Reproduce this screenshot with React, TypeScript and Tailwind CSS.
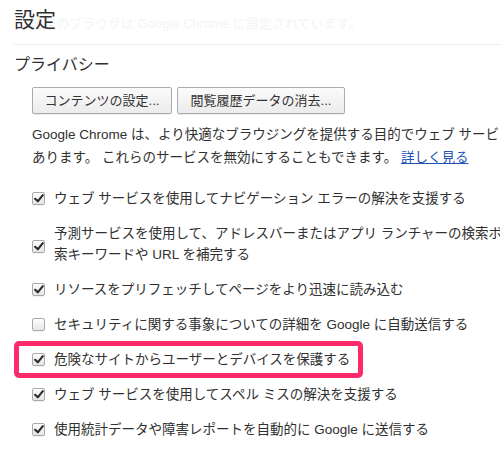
import React from 'react'

interface Option {
  id: string
  lines: string[]
  checked: boolean
  highlight?: boolean
}

const options: Option[] = [
  { id: 'nav', lines: ['ウェブ サービスを使用してナビゲーション エラーの解決を支援する'], checked: true },
  {
    id: 'predict',
    lines: [
      '予測サービスを使用して、アドレスバーまたはアプリ ランチャーの検索ボックスに入力した検',
      '索キーワードや URL を補完する',
    ],
    checked: true,
  },
  { id: 'prefetch', lines: ['リソースをプリフェッチしてページをより迅速に読み込む'], checked: true },
  { id: 'security', lines: ['セキュリティに関する事象についての詳細を Google に自動送信する'], checked: false },
  { id: 'safe', lines: ['危険なサイトからユーザーとデバイスを保護する'], checked: true, highlight: true },
  { id: 'spell', lines: ['ウェブ サービスを使用してスペル ミスの解決を支援する'], checked: true },
  { id: 'stats', lines: ['使用統計データや障害レポートを自動的に Google に送信する'], checked: true },
]

const Checkbox = ({ checked }: { checked: boolean }) => (
  <span className="mt-[4px] flex h-[13px] w-[13px] shrink-0 items-center justify-center rounded-[2px] border border-[#a9a9a9] bg-gradient-to-b from-[#fdfdfd] to-[#e6e6e6] shadow-[0_1px_0_rgba(0,0,0,0.05)]">
    {checked && (
      <svg width="10" height="9" viewBox="0 0 10 9">
        <path d="M1.2 4.8 L3.8 7.3 L8.8 1.2" fill="none" stroke="#2a2a2a" strokeWidth="2.1" strokeLinecap="round" strokeLinejoin="round" />
      </svg>
    )}
  </span>
)

const Button = ({ label, width }: { label: string; width: string }) => (
  <button
    className={`h-[27px] ${width} rounded-[2px] border border-[#ababab] bg-gradient-to-b from-[#fbfbfb] to-[#ececec] text-[13px] text-[#333] shadow-[0_1px_0_rgba(0,0,0,0.08)]`}
  >
    {label}
  </button>
)

const App = () => {
  return (
    <div
      className="relative h-[449px] w-[500px] overflow-hidden bg-white text-[#303030]"
      style={{ fontFamily: '"Liberation Sans", "Noto Sans CJK JP", sans-serif' }}
    >
      {/* header, with scrolled text faintly under it */}
      <div className="relative ml-[13px] h-[45px] border-b border-[#ececec]">
        <span className="absolute left-[17px] top-[14px] whitespace-nowrap text-[13px] leading-[20px] text-[#f4f4f4]">
          既定のブラウザは Google Chrome に設定されています。
        </span>
        <h1 className="relative pl-[1px] pt-[8px] text-[21px] leading-[24px] text-[#303030]">設定</h1>
      </div>

      <div className="pl-[14px]">
        <h2 className="mt-[10px] text-[16px] leading-[20px]">プライバシー</h2>

        <div className="ml-[18px] mt-[12px] flex gap-[5px]">
          <Button label="コンテンツの設定..." width="w-[140px]" />
          <Button label="閲覧履歴データの消去..." width="w-[168px]" />
        </div>

        <div className="ml-[18px] mt-[9px] whitespace-nowrap text-[13.5px] leading-[23px]">
          <p>Google Chrome は、より快適なブラウジングを提供する目的でウェブ サービスを使用することが</p>
          <p>
            あります。 これらのサービスを無効にすることもできます。{' '}
            <a href="#" className="text-[#2152b8] underline">
              詳しく見る
            </a>
          </p>
        </div>

        <div className="ml-[18px] mt-[19px] flex flex-col gap-[14px]">
          {options.map((opt) => (
            <div key={opt.id} className="relative flex gap-[9px]">
              {opt.highlight && (
                <span className="absolute -left-[18px] -top-[8px] -bottom-[8px] w-[349px] rounded-[5px] border-[5px] border-[#ff2a6a]" />
              )}
              <span className={opt.lines.length > 1 ? 'flex items-center' : ''}>
                <Checkbox checked={opt.checked} />
              </span>
              <div className="whitespace-nowrap text-[13.5px] leading-[21px]">
                {opt.lines.map((line) => (
                  <p key={line}>{line}</p>
                ))}
              </div>
            </div>
          ))}
        </div>
      </div>
    </div>
  )
}

export default App
